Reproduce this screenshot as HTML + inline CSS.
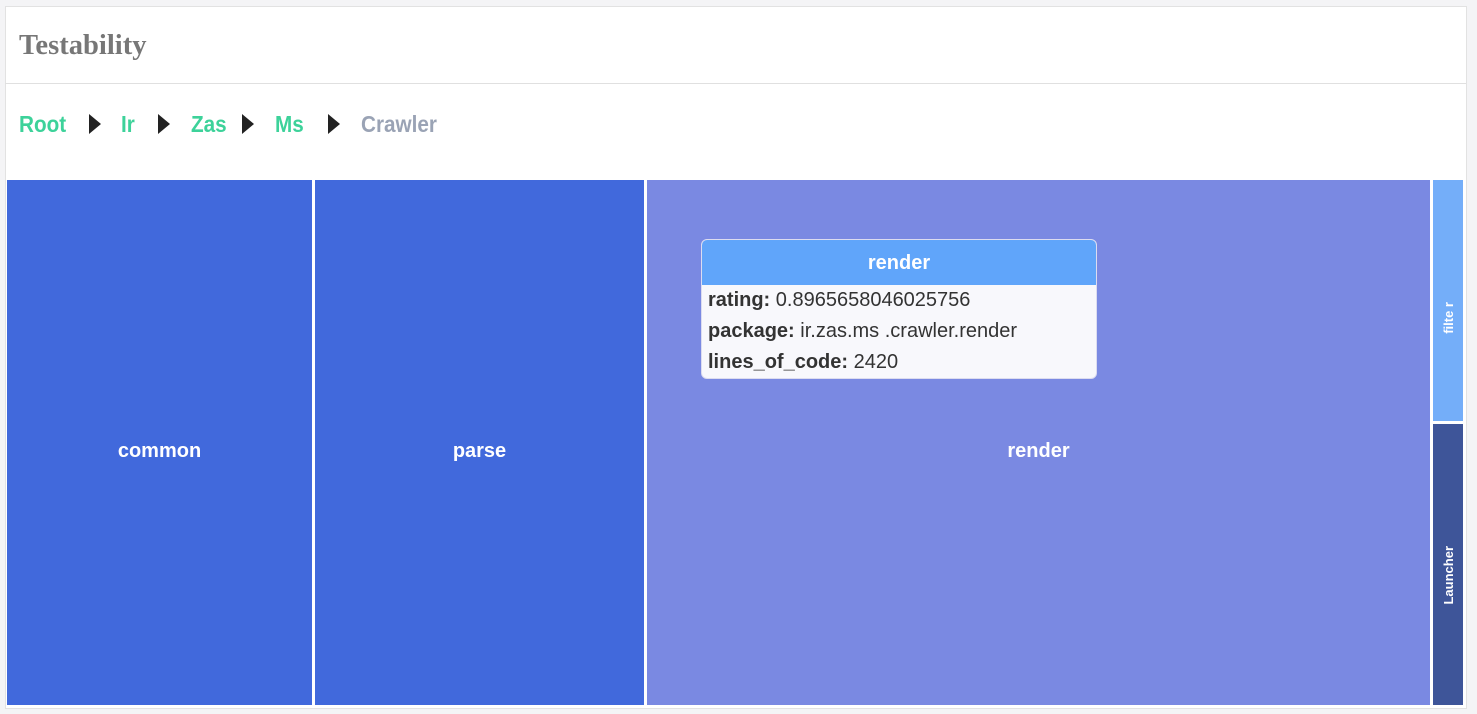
<!DOCTYPE html>
<html><head><style>
body{margin:0;width:1477px;height:714px;background:#f4f4f6;position:relative;overflow:hidden;font-family:"Liberation Sans",sans-serif}
.card{position:absolute;left:5px;top:6px;width:1460px;height:701px;background:#fff;border:1px solid #e2e2e2}
.title{position:absolute;left:19px;top:30px;font-family:"Liberation Serif",serif;font-weight:bold;font-size:28px;color:#777;transform:scaleX(1.02);transform-origin:left}
.hr{position:absolute;left:5px;top:83px;width:1461px;height:1px;background:#e0e0e0}
.bc{position:absolute;top:111px;font-size:23px;font-weight:bold;color:#3dd29a;transform:scaleX(.9);transform-origin:left}
.ar{position:absolute;top:114px;width:0;height:0;border-top:10px solid transparent;border-bottom:10px solid transparent;border-left:12px solid #222}
.b{position:absolute;display:flex;align-items:center;justify-content:center;color:#fff;font-weight:bold;font-size:20px;box-sizing:border-box;padding-top:17px}
.v{writing-mode:vertical-rl;transform:rotate(180deg);font-size:13px}
.tt{position:absolute;left:701px;top:239px;width:394px;height:138px;border:1px solid #dcdcf0;border-radius:6px;background:#f8f8fc;overflow:hidden}
.tt .h{height:45px;background:#60a5fa;color:#fff;font-weight:bold;font-size:20px;text-align:center;line-height:47px}
.tt p{margin:0;padding-left:6px;font-size:20px;color:#333;line-height:31px;height:31px}
</style></head><body>
<div class="card"></div>
<div class="title">Testability</div>
<div class="hr"></div>
<div class="bc" style="left:19px">Root</div>
<div class="ar" style="left:89px"></div>
<div class="bc" style="left:121px">Ir</div>
<div class="ar" style="left:158px"></div>
<div class="bc" style="left:191px">Zas</div>
<div class="ar" style="left:242px"></div>
<div class="bc" style="left:275px">Ms</div>
<div class="ar" style="left:328px"></div>
<div class="bc" style="left:361px;color:#9aa3b5">Crawler</div>
<div class="b" style="left:7px;top:180px;width:305px;height:525px;background:#4169dc">common</div>
<div class="b" style="left:315px;top:180px;width:329px;height:525px;background:#4169dc">parse</div>
<div class="b" style="left:647px;top:180px;width:783px;height:525px;background:#7a89e2">render</div>
<div class="b" style="left:1433px;top:180px;width:30px;height:241px;background:#74aef9;padding-top:34px"><span class="v">filte r</span></div>
<div class="b" style="left:1433px;top:424px;width:30px;height:281px;background:#3e5599;padding-top:22px"><span class="v">Launcher</span></div>
<div class="tt"><div class="h">render</div>
<p><b>rating:</b> 0.8965658046025756</p>
<p><b>package:</b> ir.zas.ms .crawler.render</p>
<p><b>lines_of_code:</b> 2420</p></div>
</body></html>
